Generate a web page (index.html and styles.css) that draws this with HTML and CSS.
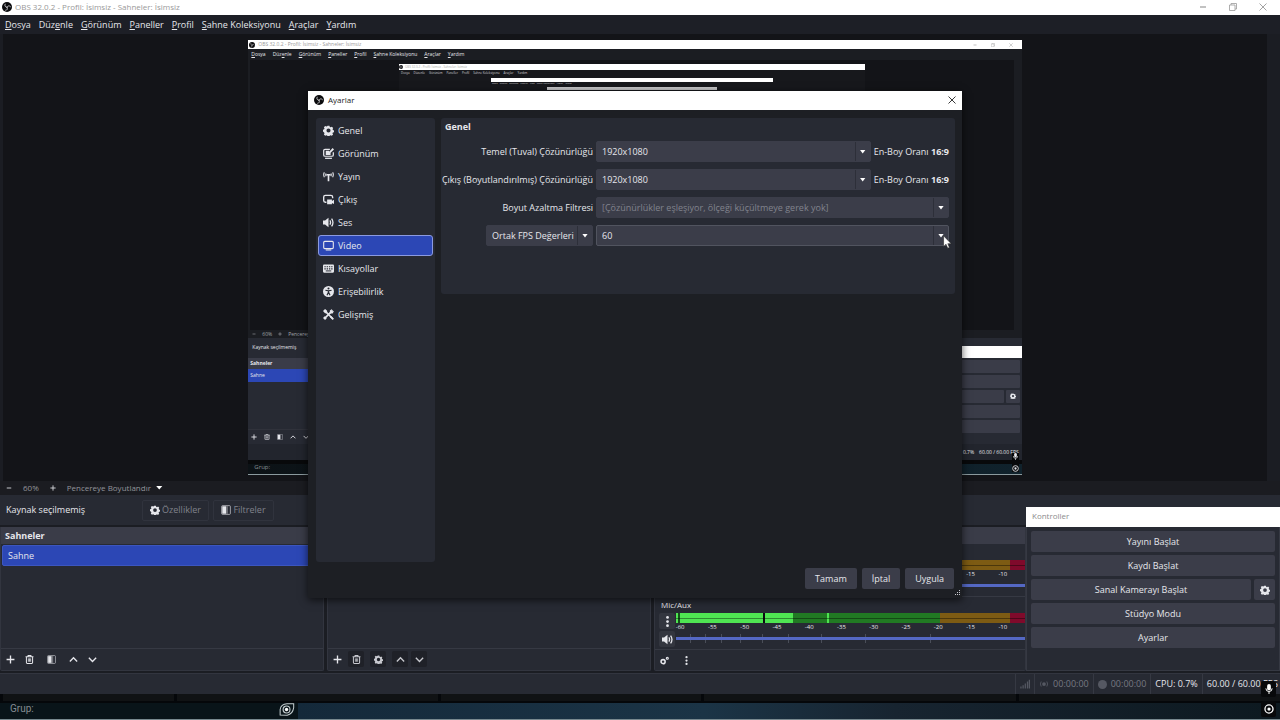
FILE: index.html
```html
<!DOCTYPE html>
<html lang="tr">
<head>
    <meta charset="UTF-8">
    <meta name="viewport" content="width=device-width, initial-scale=1.0">
    <title>OBS 32.0.2 - Profil: İsimsiz - Sahneler: İsimsiz</title>
    <link rel="stylesheet" href="styles.css">
</head>
<body>
    <svg class="symbols" aria-hidden="true">
        <symbol id="i-obs" viewBox="0 0 20 20">
            <circle cx="10" cy="10" r="10" fill="#0b0b0d"/>
            <g fill="none" stroke="#d5d5d8" stroke-width="1.7" stroke-linecap="round">
                <path d="M10 10.500C6.200 10.400 4.600 7.300 6.200 4.300"/>
                <path d="M10 10.500C11.500 7 15 6.700 17 9.300"/>
                <path d="M10 10.500C12 13.800 10.500 16.500 7.400 16.600"/>
            </g>
        </symbol>
        <symbol id="i-gear" viewBox="0 0 16 16">
            <path fill="currentColor" fill-rule="evenodd" d="M6.600 1h2.800l.5 1.800 1.300.6 1.700-.9 1.900 1.900-.9 1.700.6 1.200 1.500.6v2.600l-1.700.5-.5 1.200.9 1.700-1.900 1.900-1.700-.9-1.200.5-.5 1.600H6.600l-.5-1.700-1.200-.5-1.700.9-1.900-1.900.9-1.700-.6-1.200L0 9.400V6.800l1.700-.6.5-1.200-.9-1.700 1.900-1.900 1.700.9 1.200-.5zM8 5a3 3 0 1 0 0 6 3 3 0 0 0 0-6z"/>
        </symbol>
        <symbol id="i-look" viewBox="0 0 16 16">
            <g fill="none" stroke="currentColor" stroke-width="1.800">
                <path d="M10 2H3Q1 2 1 4v6q0 2 2 2h10q2 0 2-2V6"/>
                <path d="M3 15h10"/>
            </g>
            <path fill="currentColor" d="M4 4h5v2l2 1v3H4zM14 0l2 2-6 6-2.500.8L8.300 6z"/>
        </symbol>
        <symbol id="i-antenna" viewBox="0 0 16 16">
            <g fill="none" stroke="currentColor" stroke-width="1.600">
                <path d="M2 2Q0 5.500 2 9M4.500 3.500Q3.500 5.500 4.500 7.500M14 2q2 3.500 0 7M11.500 3.500q1 2 0 4"/>
                <path stroke-width="2.400" d="M8 5v10M5 5.500h6"/>
            </g>
        </symbol>
        <symbol id="i-output" viewBox="0 0 16 16">
            <path fill="none" stroke="currentColor" stroke-width="2" d="M5 12H3.500Q1 12 1 9.500v-5Q1 2 3.500 2h8Q14 2 14 4.500V6"/>
            <path fill="currentColor" d="M6 8h7v2l3-1.500v6L13 13v2H6z"/>
        </symbol>
        <symbol id="i-sound" viewBox="0 0 16 16">
            <path fill="currentColor" d="M0 5h3l5-4v14l-5-4H0z"/>
            <path fill="none" stroke="currentColor" stroke-width="1.900" d="M10 5q2 3 0 6M12.500 2.500q4 5.500 0 11"/>
        </symbol>
        <symbol id="i-screen" viewBox="0 0 16 16">
            <rect x="1" y="2" width="14" height="10.500" rx="1.500" fill="none" stroke="currentColor" stroke-width="1.600"/>
            <path fill="none" stroke="currentColor" stroke-width="1.600" d="M4 14.500h8"/>
        </symbol>
        <symbol id="i-keyboard" viewBox="0 0 16 16">
            <rect y="2" width="16" height="12" rx="1.500" fill="currentColor"/>
            <path stroke="#272a33" stroke-width="1.600" stroke-dasharray="2 1.300" d="M2 5.500h12M2 8.500h12"/>
            <path stroke="#272a33" stroke-width="1.400" d="M4 11.500h8"/>
        </symbol>
        <symbol id="i-access" viewBox="0 0 16 16">
            <circle cx="8" cy="8" r="8" fill="currentColor"/>
            <circle cx="8" cy="3.500" r="1.500" fill="#272a33"/>
            <path fill="none" stroke="#272a33" stroke-width="1.700" d="M3.500 6.200 8 7l4.500-.8M8 6.500v3M5.800 13.500 8 9l2.200 4.500"/>
        </symbol>
        <symbol id="i-tools" viewBox="0 0 16 16">
            <path fill="none" stroke="currentColor" stroke-width="2.400" d="M2 14 14 2M3.500 3.500l10 10"/>
            <path fill="currentColor" d="M0 3l3-3 3 2.500v3.500H3zM10 2l3-2-.5 3.500L16 3l-2 3.500h-4zM10 12l2-2 4 4-2 2zM0 13l2.500-2.500 3 3L3 16z"/>
        </symbol>
        <symbol id="i-filter" viewBox="0 0 16 16">
            <rect x="1" y="1" width="14" height="14" rx="1.500" fill="none" stroke="currentColor" stroke-width="1.400" opacity=".7"/>
            <path fill="currentColor" d="M2 2h6v12H2z"/>
            <path fill="currentColor" opacity=".4" d="M8 2h3v12H8z"/>
        </symbol>
        <symbol id="i-plus" viewBox="0 0 16 16">
            <path stroke="currentColor" stroke-width="2.400" d="M8 1v14M1 8h14"/>
        </symbol>
        <symbol id="i-minus" viewBox="0 0 16 16">
            <path stroke="currentColor" stroke-width="2.400" d="M2 8h12"/>
        </symbol>
        <symbol id="i-trash" viewBox="0 0 16 16">
            <path fill="none" stroke="currentColor" stroke-width="1.800" d="M1 3h14M5.500 2V1h5v1M2.500 3v10.500Q2.500 15 4 15h8q1.500 0 1.500-1.500V3"/>
            <path stroke="currentColor" stroke-width="1.400" d="M6 6v6M8 6v6M10 6v6"/>
        </symbol>
        <symbol id="i-up" viewBox="0 0 16 16">
            <path fill="none" stroke="currentColor" stroke-width="2.400" d="M1.500 11.500 8 5l6.500 6.500"/>
        </symbol>
        <symbol id="i-down" viewBox="0 0 16 16">
            <path fill="none" stroke="currentColor" stroke-width="2.400" d="M1.500 5 8 11.500 14.500 5"/>
        </symbol>
        <symbol id="i-dots" viewBox="0 0 16 16">
            <circle cx="8" cy="2" r="2" fill="currentColor"/>
            <circle cx="8" cy="8" r="2" fill="currentColor"/>
            <circle cx="8" cy="14" r="2" fill="currentColor"/>
        </symbol>
        <symbol id="i-gears" viewBox="0 0 16 16">
            <circle cx="5.500" cy="10" r="3.600" fill="none" stroke="currentColor" stroke-width="2.800"/>
            <circle cx="13" cy="4" r="1.800" fill="none" stroke="currentColor" stroke-width="2"/>
        </symbol>
        <symbol id="i-mic" viewBox="0 0 16 16">
            <rect x="5" y="0" width="6" height="10" rx="3" fill="currentColor"/>
            <path fill="none" stroke="currentColor" stroke-width="1.600" d="M3 7q0 5 5 5t5-5M8 12v4"/>
        </symbol>
        <symbol id="i-record" viewBox="0 0 16 16">
            <circle cx="8" cy="8" r="6.500" fill="none" stroke="currentColor" stroke-width="2"/>
            <circle cx="8" cy="8" r="2.600" fill="currentColor"/>
        </symbol>
        <symbol id="i-stream" viewBox="0 0 16 16">
            <circle cx="8" cy="8" r="3" fill="currentColor"/>
            <path fill="none" stroke="currentColor" stroke-width="1.400" d="M3.500 4q-2.500 4 0 8M12.500 4q2.500 4 0 8"/>
        </symbol>
        <symbol id="i-signal" viewBox="0 0 16 16">
            <path stroke="currentColor" stroke-width="2" d="M1.500 12v3M5 10v5M8.500 7v8M12 4v11M15 1v14"/>
        </symbol>
        <symbol id="i-close" viewBox="0 0 16 16">
            <path stroke="currentColor" stroke-width="1.800" d="M1 1l14 14M15 1 1 15"/>
        </symbol>
        <symbol id="i-restore" viewBox="0 0 16 16">
            <path fill="none" stroke="currentColor" stroke-width="1.600" d="M1 4h11v11H1zM4 4V1h11v11h-3"/>
        </symbol>
    </svg>

    <div class="app">
        <header class="titlebar">
            <svg class="logo"><use href="#i-obs"/></svg>
            <span class="title">OBS 32.0.2 - Profil: İsimsiz - Sahneler: İsimsiz</span>
            <div class="window-buttons">
                <button aria-label="Simge durumuna küçült"><svg><use href="#i-minus"/></svg></button>
                <button aria-label="Önceki boyut"><svg><use href="#i-restore"/></svg></button>
                <button aria-label="Kapat"><svg><use href="#i-close"/></svg></button>
            </div>
        </header>

        <nav class="menubar">
            <a href="#"><u>D</u>osya</a>
            <a href="#">Düz<u>e</u>nle</a>
            <a href="#"><u>G</u>örünüm</a>
            <a href="#"><u>P</u>aneller</a>
            <a href="#"><u>P</u>rofil</a>
            <a href="#"><u>S</u>ahne Koleksiyonu</a>
            <a href="#"><u>A</u>raçlar</a>
            <a href="#"><u>Y</u>ardım</a>
        </nav>

        <section class="preview">
            <div class="canvas">
                <!-- display capture of the whole desktop -->
                <div class="mini-title">
                    <svg><use href="#i-obs"/></svg>
                    <span>OBS 32.0.2 - Profil: İsimsiz - Sahneler: İsimsiz</span>
                    <div class="mini-window-buttons">
                        <svg><use href="#i-minus"/></svg>
                        <svg><use href="#i-restore"/></svg>
                        <svg><use href="#i-close"/></svg>
                    </div>
                </div>
                <div class="mini-menu">
                    <span><u>D</u>osya</span><span>Düz<u>e</u>nle</span><span><u>G</u>örünüm</span><span><u>P</u>aneller</span><span><u>P</u>rofil</span><span><u>S</u>ahne Koleksiyonu</span><span><u>A</u>raçlar</span><span><u>Y</u>ardım</span>
                </div>
                <div class="mini-preview">
                    <div class="capture capture-2">
                        <div class="capture-title"><svg><use href="#i-obs"/></svg><span>OBS 32.0.2 - Profil: İsimsiz - Sahneler: İsimsiz</span></div>
                        <div class="capture-menu"><span>Dosya</span><span>Düzenle</span><span>Görünüm</span><span>Paneller</span><span>Profil</span><span>Sahne Koleksiyonu</span><span>Araçlar</span><span>Yardım</span></div>
                        <div class="capture capture-3">
                            <div class="capture-title"></div>
                            <div class="capture-menu"><span>Dosya</span><span>Düzenle</span><span>Görünüm</span><span>Paneller</span><span>Profil</span><span>Sahne Koleksiyonu</span><span>Araçlar</span><span>Yardım</span></div>
                            <div class="capture capture-4">
                                <div class="capture-title"></div>
                            </div>
                        </div>
                    </div>
                </div>
                <div class="mini-zoom">
                    <svg><use href="#i-minus"/></svg>
                    <span>60%</span>
                    <svg><use href="#i-plus"/></svg>
                    <span>Pencereye</span>
                </div>
                <div class="mini-source">Kaynak seçilmemiş</div>
                <div class="mini-docks">
                    <div class="mini-scenes">
                        <b>Sahneler</b>
                        <div class="mini-selected">Sahne</div>
                        <div class="mini-tools">
                            <svg><use href="#i-plus"/></svg>
                            <svg><use href="#i-trash"/></svg>
                            <svg><use href="#i-filter"/></svg>
                            <svg><use href="#i-up"/></svg>
                            <svg><use href="#i-down"/></svg>
                        </div>
                    </div>
                    <div class="mini-controls">
                        <div class="mini-controls-title"></div>
                        <div class="mini-button"></div>
                        <div class="mini-button"></div>
                        <div class="mini-pair">
                            <div class="mini-button"></div>
                            <div class="mini-button"><svg><use href="#i-gear"/></svg></div>
                        </div>
                        <div class="mini-button"></div>
                        <div class="mini-button"></div>
                    </div>
                </div>
                <div class="mini-status">CPU: 0.7%<span>60.00 / 60.00 FPS</span></div>
                <div class="mini-desktop">Grup:</div>
                <div class="mini-tray">
                    <svg><use href="#i-mic"/></svg>
                    <svg><use href="#i-record"/></svg>
                </div>
            </div>
        </section>

        <div class="zoombar">
            <button aria-label="Uzaklaştır"><svg><use href="#i-minus"/></svg></button>
            <span>60%</span>
            <button aria-label="Yakınlaştır"><svg><use href="#i-plus"/></svg></button>
            <div class="zoom-mode">
                <select aria-label="Önizleme ölçeği">
                    <option>Pencereye Boyutlandır</option>
                </select>
            </div>
        </div>

        <div class="source-bar">
            <span class="source-name">Kaynak seçilmemiş</span>
            <button disabled><svg><use href="#i-gear"/></svg>Özellikler</button>
            <button disabled><svg><use href="#i-filter"/></svg>Filtreler</button>
        </div>

        <div class="docks">
            <section class="dock">
                <h2>Sahneler</h2>
                <ul class="dock-list">
                    <li class="selected">Sahne</li>
                </ul>
                <div class="dock-tools">
                    <button aria-label="Ekle"><svg><use href="#i-plus"/></svg></button>
                    <button aria-label="Kaldır"><svg><use href="#i-trash"/></svg></button>
                    <button aria-label="Filtreler"><svg><use href="#i-filter"/></svg></button>
                    <button aria-label="Yukarı"><svg><use href="#i-up"/></svg></button>
                    <button aria-label="Aşağı"><svg><use href="#i-down"/></svg></button>
                </div>
            </section>

            <section class="dock" aria-label="Kaynaklar">
                <h2></h2>
                <ul class="dock-list"></ul>
                <div class="dock-tools dimmed">
                    <button aria-label="Ekle"><svg><use href="#i-plus"/></svg></button>
                    <button aria-label="Kaldır"><svg><use href="#i-trash"/></svg></button>
                    <button aria-label="Özellikler"><svg><use href="#i-gear"/></svg></button>
                    <button aria-label="Yukarı"><svg><use href="#i-up"/></svg></button>
                    <button aria-label="Aşağı"><svg><use href="#i-down"/></svg></button>
                </div>
            </section>

            <section class="dock mixer" aria-label="Ses Karıştırıcısı">
                <h2></h2>
                <div class="channel">
                    <div class="channel-name"></div>
                    <div class="channel-body">
                        <div class="channel-buttons">
                            <button aria-label="Seçenekler"><svg><use href="#i-dots"/></svg></button>
                            <button aria-label="Sessiz"><svg><use href="#i-sound"/></svg></button>
                        </div>
                        <div class="channel-meter">
                            <div class="meter idle"></div>
                            <div class="ticks"><span></span><span></span><span></span><span></span><span></span><span></span><span></span><span></span><span></span><span>-15</span><span>-10</span></div>
                            <input type="range" aria-label="Masaüstü Sesi düzeyi" value="100">
                        </div>
                    </div>
                </div>
                <div class="channel">
                    <div class="channel-name">Mic/Aux</div>
                    <div class="channel-body">
                        <div class="channel-buttons">
                            <button aria-label="Seçenekler"><svg><use href="#i-dots"/></svg></button>
                            <button aria-label="Sessiz"><svg><use href="#i-sound"/></svg></button>
                        </div>
                        <div class="channel-meter">
                            <div class="meter"></div>
                            <div class="ticks"><span>-60</span><span>-55</span><span>-50</span><span>-45</span><span>-40</span><span>-35</span><span>-30</span><span>-25</span><span>-20</span><span>-15</span><span>-10</span></div>
                            <input type="range" aria-label="Mic/Aux düzeyi" value="100">
                        </div>
                    </div>
                </div>
                <div class="dock-tools">
                    <button aria-label="Gelişmiş ses"><svg><use href="#i-gears"/></svg></button>
                    <button aria-label="Menü"><svg><use href="#i-dots"/></svg></button>
                </div>
            </section>

            <section class="controls">
                <div class="controls-title">Kontroller</div>
                <div class="controls-body">
                    <button class="btn">Yayını Başlat</button>
                    <button class="btn">Kaydı Başlat</button>
                    <div class="btn-pair">
                        <button class="btn">Sanal Kamerayı Başlat</button>
                        <button class="btn btn-icon" aria-label="Sanal kamera ayarları"><svg><use href="#i-gear"/></svg></button>
                    </div>
                    <button class="btn">Stüdyo Modu</button>
                    <button class="btn">Ayarlar</button>
                </div>
            </section>
        </div>

        <footer class="statusbar">
            <div class="cell dim"><svg><use href="#i-signal"/></svg></div>
            <div class="cell dim"><svg><use href="#i-stream"/></svg>00:00:00</div>
            <div class="cell dim"><i class="rec-dot"></i>00:00:00</div>
            <div class="cell">CPU: 0.7%</div>
            <div class="cell">60.00 / 60.00 FPS</div>
        </footer>

        <div class="desktop">
            <div class="desktop-tabs"><i></i><i></i><i></i><i></i><i></i></div>
            <div class="desktop-bar">
                <span>Grup:</span>
                <svg viewBox="0 0 16 14">
                    <path fill="none" stroke="#c4cdd0" stroke-width="1.100" d="M.6 13V7Q1.500 1 8 .8h7.200V5q-1 7-7 8.200z"/>
                    <circle cx="7.500" cy="7" r="3.700" fill="none" stroke="#c4cdd0" stroke-width="1.200"/>
                    <circle cx="7.500" cy="7" r="1.800" fill="#fff"/>
                </svg>
            </div>
        </div>

        <div class="tray">
            <span><svg><use href="#i-mic"/></svg></span>
            <span><svg><use href="#i-record"/></svg></span>
        </div>
    </div>

    <div class="dialog" role="dialog" aria-label="Ayarlar">
        <div class="dialog-title">
            <svg class="logo"><use href="#i-obs"/></svg>
            <span class="title">Ayarlar</span>
            <button aria-label="Kapat"><svg><use href="#i-close"/></svg></button>
        </div>
        <div class="dialog-body">
            <ul class="sidebar">
                <li><a href="#"><svg><use href="#i-gear"/></svg>Genel</a></li>
                <li><a href="#"><svg><use href="#i-look"/></svg>Görünüm</a></li>
                <li><a href="#"><svg><use href="#i-antenna"/></svg>Yayın</a></li>
                <li><a href="#"><svg><use href="#i-output"/></svg>Çıkış</a></li>
                <li><a href="#"><svg><use href="#i-sound"/></svg>Ses</a></li>
                <li><a href="#" class="active"><svg><use href="#i-screen"/></svg>Video</a></li>
                <li><a href="#"><svg><use href="#i-keyboard"/></svg>Kısayollar</a></li>
                <li><a href="#"><svg><use href="#i-access"/></svg>Erişebilirlik</a></li>
                <li><a href="#"><svg><use href="#i-tools"/></svg>Gelişmiş</a></li>
            </ul>
            <form class="panel">
                <h3>Genel</h3>
                <div class="form-row">
                    <label for="base">Temel (Tuval) Çözünürlüğü</label>
                    <div class="combo"><select id="base"><option>1920x1080</option></select></div>
                    <span class="aspect">En-Boy Oranı <b>16:9</b></span>
                </div>
                <div class="form-row">
                    <label for="output">Çıkış (Boyutlandırılmış) Çözünürlüğü</label>
                    <div class="combo"><select id="output"><option>1920x1080</option></select></div>
                    <span class="aspect">En-Boy Oranı <b>16:9</b></span>
                </div>
                <div class="form-row">
                    <label for="filter">Boyut Azaltma Filtresi</label>
                    <div class="combo"><select id="filter" disabled><option>[Çözünürlükler eşleşiyor, ölçeği küçültmeye gerek yok]</option></select></div>
                </div>
                <div class="form-row">
                    <div class="fps-type">
                        <div class="combo"><select id="fpstype" aria-label="FPS türü"><option>Ortak FPS Değerleri</option></select></div>
                    </div>
                    <div class="combo focused"><select id="fps" aria-label="FPS"><option>60</option></select></div>
                </div>
            </form>
        </div>
        <div class="dialog-footer">
            <button class="btn">Tamam</button>
            <button class="btn">İptal</button>
            <button class="btn">Uygula</button>
        </div>
        <svg class="grip" viewBox="0 0 6 6"><path fill="#c8c9cf" d="M4 0h1v1H4zM4 2h1v1H4zM2 2h1v1H2zM0 4h1v1H0zM2 4h1v1H2zM4 4h1v1H4z"/></svg>
        <svg class="cursor" viewBox="0 0 8 12"><path fill="#fff" stroke="#222" stroke-width=".5" d="M.5.500v9.500l2.200-2L4.200 11.500l1.500-.7L4.300 7.500h3z"/></svg>
    </div>
</body>
</html>
```
FILE: styles.css
```css
* {
    margin: 0;
    padding: 0;
    box-sizing: border-box;
}

body {
    font-family: 'Open Sans', 'Noto Sans', sans-serif;
    font-size: 9px;
    line-height: 12px;
    color: #e6e7ec;
    background: #131418;
    overflow: hidden;
}

button,
select,
input {
    font: inherit;
    color: inherit;
    border: none;
    background: none;
}

a {
    color: inherit;
    text-decoration: none;
}

ul {
    list-style: none;
}

svg {
    display: block;
    flex: none;
}

.symbols {
    position: absolute;
    width: 0;
    height: 0;
}

.app {
    position: relative;
    display: flex;
    flex-direction: column;
    height: 100vh;
    background: #1b1d23;
}

/* title + menu */
.titlebar {
    display: flex;
    align-items: center;
    gap: 3px;
    height: 15px;
    padding: 0 13px 1px 2px;
    background: #fff;
    color: #999;
    font-size: 8px;
}

.logo {
    width: 10px;
    height: 10px;
}

.window-buttons {
    display: flex;
    gap: 22px;
    margin-left: auto;
}

.window-buttons svg {
    width: 8px;
    height: 8px;
}

.menubar {
    display: flex;
    align-items: center;
    gap: 8px;
    height: 19px;
    padding: 0 5px;
    background: #1d1f26;
}

.menubar u {
    text-underline-offset: 1px;
}

/* preview */
.preview {
    display: flex;
    justify-content: center;
    flex: 1;
    min-height: 0;
    margin: 0 13px 0 3px;
    padding: 6px 0;
    background: #131418;
}

.canvas {
    position: relative;
    display: flex;
    flex-direction: column;
    aspect-ratio: 16 / 9;
    background: #1b1d22;
    border-bottom: 1px solid #8b9a9e;
    overflow: hidden;
    font-size: 5px;
    line-height: 7px;
}

.mini-title {
    display: flex;
    align-items: center;
    gap: 3px;
    height: 9px;
    padding: 0 9px 0 1px;
    background: #fff;
    color: #999;
}

.mini-title svg {
    width: 6px;
    height: 6px;
}

.mini-window-buttons {
    display: flex;
    gap: 14px;
    margin-left: auto;
}

.mini-window-buttons svg {
    width: 4px;
    height: 4px;
}

.mini-menu {
    display: flex;
    align-items: center;
    gap: 7px;
    height: 11px;
    padding: 0 3px;
}

.mini-preview {
    flex: 1;
    margin: 0 8px 0 2px;
    padding-top: 4px;
    background: #131418;
}

.capture {
    margin: 0 auto;
    background: #17181c;
}

.capture-title {
    display: flex;
    align-items: center;
    gap: 2px;
    background: #fff;
    color: #aaa;
}

.capture-menu {
    display: flex;
    align-items: center;
    color: #d0d0d4;
}

.capture-2 {
    width: 466px;
    height: 262px;
    font-size: 3px;
    line-height: 5px;
}

.capture-2 > .capture-title {
    height: 6px;
}

.capture-2 > .capture-title svg {
    width: 4px;
    height: 4px;
}

.capture-2 > .capture-menu {
    gap: 4px;
    height: 6px;
    padding: 0 2px;
}

.capture-3 {
    width: 282px;
    margin-top: 2px;
    font-size: 2px;
    line-height: 3px;
}

.capture-3 > .capture-title {
    height: 4px;
}

.capture-3 > .capture-menu {
    gap: 2px;
    height: 3px;
    padding: 0 1px;
}

.capture-4 {
    width: 170px;
    margin-top: 2px;
}

.capture-4 > .capture-title {
    height: 3px;
    background: #c4c4c6;
}

.mini-zoom {
    display: flex;
    align-items: center;
    gap: 6px;
    height: 8px;
    padding: 0 4px;
    color: #a2a3a9;
}

.mini-zoom svg {
    width: 4px;
    height: 4px;
}

.mini-source {
    height: 20px;
    padding: 6px 4px;
    background: #272a33;
}

.mini-docks {
    display: flex;
    justify-content: space-between;
    height: 86px;
    background: #272a33;
}

.mini-scenes {
    display: flex;
    flex-direction: column;
    width: 200px;
}

.mini-scenes b {
    height: 11px;
    padding: 2px;
    background: #3a3c48;
}

.mini-selected {
    height: 13px;
    padding: 3px 2px;
    background: #2c47b5;
}

.mini-tools {
    display: flex;
    gap: 7px;
    margin-top: auto;
    padding: 4px 3px;
    border-top: 1px solid #30323b;
}

.mini-tools svg {
    width: 6px;
    height: 6px;
}

.mini-controls {
    display: flex;
    flex-direction: column;
    gap: 2px;
    width: 153px;
    margin-top: -12px;
    padding-right: 2px;
}

.mini-controls-title {
    height: 12px;
    margin-right: -2px;
    background: #fff;
}

.mini-button {
    flex: none;
    height: 13px;
    background: #3a3c48;
    border-radius: 1px;
}

.mini-pair {
    display: flex;
    gap: 2px;
}

.mini-pair .mini-button {
    flex: 1;
}

.mini-pair .mini-button:last-child {
    flex: none;
    padding: 3px 4px;
}

.mini-pair svg {
    width: 6px;
    height: 6px;
}

.mini-status {
    display: flex;
    justify-content: flex-end;
    gap: 5px;
    height: 16px;
    padding: 5px 3px;
    background: #22252d;
}

.mini-desktop {
    height: 14px;
    padding: 0 6px;
    background: linear-gradient(90deg, #0c1216, #10222c);
    border-top: 4px solid #08090b;
    color: #8a8f95;
    font-size: 6px;
}

.mini-tray {
    position: absolute;
    right: 3px;
    bottom: 2px;
    display: grid;
    gap: 5px;
    background: #08090b;
}

.mini-tray svg {
    width: 7px;
    height: 7px;
}

/* bars under the preview */
.zoombar {
    display: flex;
    align-items: center;
    gap: 11px;
    height: 14px;
    padding: 0 6px 1px;
    background: #1b1c21;
    color: #92949b;
    font-size: 8px;
}

.zoombar svg {
    width: 6px;
    height: 6px;
    color: #d8d9de;
}

.zoom-mode {
    display: grid;
    align-items: center;
    width: 96px;
}

.zoom-mode select {
    appearance: none;
    grid-area: 1 / 1;
}

.zoom-mode::after {
    content: '';
    grid-area: 1 / 1;
    justify-self: end;
    width: 7px;
    height: 4px;
    background: #fff;
    clip-path: polygon(0 0, 100% 0, 50% 100%);
    pointer-events: none;
}

.source-bar {
    display: flex;
    align-items: center;
    height: 30px;
    margin-bottom: 2px;
    padding: 0 6px;
    background: #272a33;
}

.source-name {
    width: 136px;
}

.source-bar button {
    display: flex;
    align-items: center;
    justify-content: center;
    gap: 2px;
    width: 67px;
    height: 21px;
    margin-right: 4px;
    border: 1px solid #30333d;
    border-radius: 2px;
    color: #80828b;
}

.source-bar button:last-child {
    width: 61px;
}

.source-bar svg {
    width: 10px;
    height: 10px;
    color: #e6e7ec;
}

/* docks */
.docks {
    display: flex;
    gap: 3px;
    height: 144px;
}

.dock {
    display: flex;
    flex-direction: column;
    flex: 1 1 324px;
    min-width: 0;
    background: #272a33;
    border: 1px solid #32353f;
    border-top: none;
    border-radius: 0 0 2px 2px;
}

.dock h2 {
    flex: none;
    height: 17px;
    padding: 2px 4px;
    background: #3a3c48;
    font-size: 9px;
    line-height: 13px;
}

.dock-list {
    flex: 1;
    padding: 1px;
}

.dock-list li {
    height: 21px;
    padding: 4px 5px;
    border-radius: 2px;
}

.dock-list .selected {
    background: #2c47b5;
    border: 1px solid #3c56bf;
}

.dock-tools {
    display: flex;
    align-items: center;
    gap: 3px;
    height: 22px;
    margin-top: auto;
    padding: 0 1px 1px;
    border-top: 1px solid #363943;
}

.dock-tools button {
    display: grid;
    place-items: center;
    width: 16px;
    height: 16px;
    border-radius: 2px;
}

.dock-tools button:nth-child(3) {
    margin: 0 3px;
}

.dock-tools svg {
    width: 9px;
    height: 9px;
}

.dimmed button:not(:first-child) {
    background: #1f2128;
    color: #c8c9cf;
}

.mixer {
    flex: 1 1 372px;
    margin-right: -3px;
}

.mixer .dock-tools {
    flex: none;
    gap: 6px;
}

.channel {
    flex: none;
    height: 52px;
    padding: 0 0 0 4px;
}

.channel + .channel {
    height: 53px;
    border-top: 1px solid #363943;
}

.channel-name {
    height: 16px;
    padding-left: 2px;
    font-size: 8px;
    line-height: 15px;
}

.channel-body {
    display: flex;
    gap: 1px;
}

.channel-buttons {
    display: grid;
    gap: 2px;
}

.channel-buttons button {
    display: grid;
    place-items: center;
    width: 16px;
    height: 16px;
    background: #33363f;
    border-radius: 2px;
}

.channel-buttons svg {
    width: 11px;
    height: 11px;
}

.channel-meter {
    flex: 1;
    min-width: 0;
}

.meter {
    height: 10px;
    background:
        linear-gradient(#0006, #0006) 0 5px / 100% 1px no-repeat,
        linear-gradient(90deg,
            #4fe552 2px, #14501a 2px 4px, #4fe552 4px 87px,
            #0b0c10 87px 89px, #4fe552 89px 117px, #217a23 117px 151px,
            #4fe552 151px 153px, #217a23 153px 264px,
            #7d5b13 264px 334px, #7f0a2b 334px);
}

.meter.idle {
    background:
        linear-gradient(#0006, #0006) 0 5px / 100% 1px no-repeat,
        linear-gradient(90deg, #217a23 264px, #7d5b13 264px 334px, #7f0a2b 334px);
}

.ticks {
    display: flex;
    height: 8px;
    margin: 0 6px 0 -12px;
    font-size: 6px;
    line-height: 9px;
    text-align: center;
}

.ticks span {
    flex: 1;
}

.channel-meter input {
    appearance: none;
    display: block;
    width: 100%;
    height: 14px;
    background:
        linear-gradient(#5468c4, #5468c4) 0 6px / 100% 3px no-repeat,
        linear-gradient(90deg,
            transparent 14px, #4a4e59 14px 15px, transparent 15px 29px,
            #4a4e59 29px 30px, transparent 30px 45px, #4a4e59 45px 46px,
            transparent 46px 64px, #4a4e59 64px 65px, transparent 65px 86px,
            #4a4e59 86px 87px, transparent 87px 112px, #4a4e59 112px 113px,
            transparent 113px 145px, #4a4e59 145px 146px, transparent 146px 189px,
            #4a4e59 189px 190px, transparent 190px 254px, #4a4e59 254px 255px,
            transparent 255px) 0 3px / 100% 9px no-repeat;
}

.channel-meter input::-webkit-slider-thumb {
    appearance: none;
    width: 0;
}

/* floating controls window, rises over the source bar */
.controls {
    flex: none;
    width: 254px;
    margin-top: -20px;
    background: #272a33;
    border: 1px solid #363943;
    border-top: none;
    z-index: 1;
}

.controls-title {
    height: 20px;
    margin: 0 -1px;
    padding: 3px 6px;
    background: #fff;
    color: #8c8c8c;
    font-size: 8px;
}

.controls-body {
    display: grid;
    gap: 3px;
    padding: 4px;
}

.btn {
    display: grid;
    place-items: center;
    height: 21px;
    background: #3b3d49;
    border-radius: 2px;
}

.btn-pair {
    display: flex;
    gap: 3px;
}

.btn-pair .btn {
    flex: 1;
}

.btn-pair .btn-icon {
    flex: none;
    width: 21px;
}

.btn-icon svg {
    width: 10px;
    height: 10px;
}

/* status bar */
.statusbar {
    display: flex;
    justify-content: flex-end;
    height: 21px;
    margin-top: 2px;
    background: #272a33;
    border-top: 1px solid #32353f;
}

.cell {
    display: flex;
    align-items: center;
    gap: 4px;
    padding: 0 4px;
    border-left: 1px solid #363943;
    white-space: nowrap;
}

.cell:last-child {
    padding-right: 2px;
}

.cell svg {
    width: 10px;
    height: 10px;
}

.dim {
    color: #777982;
}

.dim svg {
    color: #555862;
}

.rec-dot {
    width: 9px;
    height: 9px;
    border-radius: 50%;
    background: #555862;
}

/* desktop visible below the window */
.desktop {
    height: 26px;
    background: #05070a;
    border-bottom: 1px solid #78898f;
}

.desktop-tabs {
    display: flex;
    gap: 3px;
    height: 9px;
    padding: 0 0 2px 3px;
}

.desktop-tabs i {
    flex: 1 1 262px;
    background: #101214;
}

.desktop-tabs i:first-child {
    flex-basis: 172px;
}

.desktop-tabs i:nth-child(4) {
    flex-basis: 314px;
}

.desktop-bar {
    display: flex;
    height: 16px;
    padding: 0 10px;
    background: linear-gradient(90deg, #091419 0 298px, #14293a 298px, #1b3446 55%, #172430 70%, #0d1920);
    color: #858c92;
    font-family: Roboto, sans-serif;
    line-height: 12px;
}

.desktop-bar span {
    width: 269px;
    font-size: 10px;
}

.desktop-bar svg {
    width: 16px;
    height: 13px;
}

.tray {
    position: absolute;
    right: 4px;
    bottom: 3px;
    display: grid;
    gap: 4px;
    z-index: 2;
}

.tray span {
    display: grid;
    place-items: center;
    width: 15px;
    height: 16px;
    background: #08090b;
    border-radius: 2px;
}

.tray svg {
    width: 10px;
    height: 10px;
    color: #fff;
}

/* settings dialog */
.dialog {
    position: absolute;
    left: 308px;
    top: 91px;
    display: flex;
    flex-direction: column;
    width: 654px;
    height: 507px;
    background: #1d1f24;
    box-shadow: 0 2px 8px #000a;
    z-index: 3;
}

.dialog-title {
    display: flex;
    align-items: center;
    gap: 4px;
    height: 19px;
    padding: 0 6px 1px;
    background: #fff;
    color: #222;
    font-size: 8px;
}

.dialog-title button {
    margin-left: auto;
}

.dialog-title button svg {
    width: 8px;
    height: 8px;
}

.dialog-body {
    display: flex;
    align-items: flex-start;
    gap: 6px;
    flex: 1;
    padding: 8px 7px 0 8px;
}

.sidebar {
    display: flex;
    flex-direction: column;
    gap: 2px;
    align-self: stretch;
    width: 119px;
    padding: 2px;
    background: #272a33;
    border-radius: 3px;
}

.sidebar a {
    display: flex;
    align-items: center;
    gap: 4px;
    height: 21px;
    padding: 0 4px;
    border: 1px solid transparent;
    border-radius: 3px;
}

.sidebar a.active {
    background: #2c47b5;
    border-color: #8b9ae0;
}

.sidebar svg {
    width: 11px;
    height: 11px;
}

.panel {
    flex: 1;
    display: grid;
    gap: 7px;
    height: 176px;
    align-content: start;
    padding: 3px 6px 3px 2px;
    background: #272a33;
    border-radius: 3px;
}

.panel h3 {
    height: 13px;
    padding-left: 2px;
    font-size: 9px;
}

.form-row {
    display: flex;
    align-items: center;
    gap: 3px;
}

.form-row > label,
.fps-type {
    display: flex;
    justify-content: flex-end;
    flex: none;
    width: 150px;
    white-space: nowrap;
}

.combo {
    display: grid;
    align-items: center;
    flex: 1;
    min-width: 0;
    height: 21px;
    background: #3b3d49;
    border: 1px solid #3b3d49;
    border-radius: 2px;
}

.combo select {
    appearance: none;
    grid-area: 1 / 1;
    width: 100%;
    height: 19px;
    padding: 0 16px 0 5px;
    background: linear-gradient(#2d2f39, #2d2f39) right 14px top / 1px 100% no-repeat;
}

.combo select:disabled {
    color: #81838d;
    opacity: 1;
}

.combo::after {
    content: '';
    grid-area: 1 / 1;
    justify-self: end;
    width: 6px;
    height: 4px;
    margin-right: 4px;
    background: #fff;
    clip-path: polygon(0 0, 100% 0, 50% 100%);
    pointer-events: none;
}

.fps-type .combo {
    flex: none;
    width: 107px;
}

.combo.focused {
    border-color: #51545f;
}

.aspect {
    flex: none;
    white-space: nowrap;
}

.dialog-footer {
    display: flex;
    justify-content: flex-end;
    gap: 5px;
    padding: 6px 8px 9px;
}

.dialog-footer .btn {
    padding: 0 10px;
}

.grip {
    position: absolute;
    right: 1px;
    bottom: 2px;
    width: 6px;
    height: 6px;
}

.cursor {
    position: absolute;
    right: 10px;
    top: 144px;
    width: 9px;
    height: 14px;
}
```
